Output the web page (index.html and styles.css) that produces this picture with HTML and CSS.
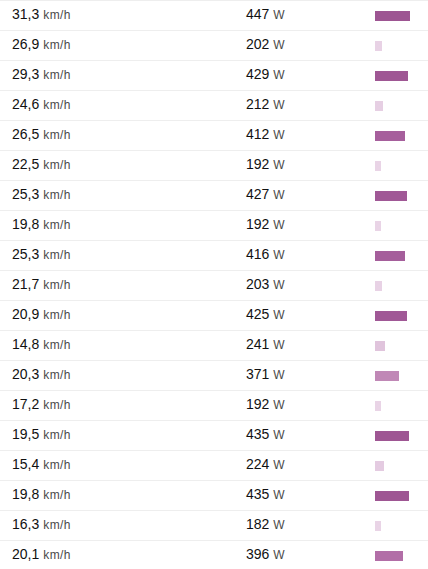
FILE: index.html
```html
<!DOCTYPE html>
<html lang="ja">
<head>
<meta charset="utf-8">
<title>Laps</title>
<link rel="stylesheet" href="styles.css">
</head>
<body>
<div class="laps">
  <div class="row"><div class="speed">31,3<span class="unit">km/h</span></div><div class="power">447<span class="unit">W</span></div><div class="barcell"><span class="bar" style="width:35px;background:#9d5592"></span></div></div>
  <div class="row"><div class="speed">26,9<span class="unit">km/h</span></div><div class="power">202<span class="unit">W</span></div><div class="barcell"><span class="bar" style="width:7px;background:#e8d2e5"></span></div></div>
  <div class="row"><div class="speed">29,3<span class="unit">km/h</span></div><div class="power">429<span class="unit">W</span></div><div class="barcell"><span class="bar" style="width:33px;background:#9f5794"></span></div></div>
  <div class="row"><div class="speed">24,6<span class="unit">km/h</span></div><div class="power">212<span class="unit">W</span></div><div class="barcell"><span class="bar" style="width:8px;background:#e6cfe3"></span></div></div>
  <div class="row"><div class="speed">26,5<span class="unit">km/h</span></div><div class="power">412<span class="unit">W</span></div><div class="barcell"><span class="bar" style="width:30px;background:#a65f9c"></span></div></div>
  <div class="row"><div class="speed">22,5<span class="unit">km/h</span></div><div class="power">192<span class="unit">W</span></div><div class="barcell"><span class="bar" style="width:6px;background:#e9d4e6"></span></div></div>
  <div class="row"><div class="speed">25,3<span class="unit">km/h</span></div><div class="power">427<span class="unit">W</span></div><div class="barcell"><span class="bar" style="width:32px;background:#a05896"></span></div></div>
  <div class="row"><div class="speed">19,8<span class="unit">km/h</span></div><div class="power">192<span class="unit">W</span></div><div class="barcell"><span class="bar" style="width:6px;background:#e9d4e6"></span></div></div>
  <div class="row"><div class="speed">25,3<span class="unit">km/h</span></div><div class="power">416<span class="unit">W</span></div><div class="barcell"><span class="bar" style="width:30px;background:#a55e9b"></span></div></div>
  <div class="row"><div class="speed">21,7<span class="unit">km/h</span></div><div class="power">203<span class="unit">W</span></div><div class="barcell"><span class="bar" style="width:7px;background:#e8d2e5"></span></div></div>
  <div class="row"><div class="speed">20,9<span class="unit">km/h</span></div><div class="power">425<span class="unit">W</span></div><div class="barcell"><span class="bar" style="width:32px;background:#a05896"></span></div></div>
  <div class="row"><div class="speed">14,8<span class="unit">km/h</span></div><div class="power">241<span class="unit">W</span></div><div class="barcell"><span class="bar" style="width:10px;background:#e0c4dc"></span></div></div>
  <div class="row"><div class="speed">20,3<span class="unit">km/h</span></div><div class="power">371<span class="unit">W</span></div><div class="barcell"><span class="bar" style="width:24px;background:#c088b6"></span></div></div>
  <div class="row"><div class="speed">17,2<span class="unit">km/h</span></div><div class="power">192<span class="unit">W</span></div><div class="barcell"><span class="bar" style="width:6px;background:#e9d4e6"></span></div></div>
  <div class="row"><div class="speed">19,5<span class="unit">km/h</span></div><div class="power">435<span class="unit">W</span></div><div class="barcell"><span class="bar" style="width:34px;background:#9e5693"></span></div></div>
  <div class="row"><div class="speed">15,4<span class="unit">km/h</span></div><div class="power">224<span class="unit">W</span></div><div class="barcell"><span class="bar" style="width:9px;background:#e4cbe1"></span></div></div>
  <div class="row"><div class="speed">19,8<span class="unit">km/h</span></div><div class="power">435<span class="unit">W</span></div><div class="barcell"><span class="bar" style="width:34px;background:#9e5693"></span></div></div>
  <div class="row"><div class="speed">16,3<span class="unit">km/h</span></div><div class="power">182<span class="unit">W</span></div><div class="barcell"><span class="bar" style="width:6px;background:#e9d4e6"></span></div></div>
  <div class="row"><div class="speed">20,1<span class="unit">km/h</span></div><div class="power">396<span class="unit">W</span></div><div class="barcell"><span class="bar" style="width:28px;background:#b26ea7"></span></div></div>
</div>
</body>
</html>
```

FILE: styles.css
```css
html, body {
  margin: 0;
  padding: 0;
  background: #ffffff;
}
body {
  font-family: "Liberation Sans", Arial, "Noto Sans CJK JP", sans-serif;
  color: #111111;
}
.laps {
  display: flex;
  flex-direction: column;
}
.row {
  display: grid;
  grid-template-columns: 234px 129px 1fr;
  align-items: center;
  height: 29px;
  padding-left: 12px;
  border-top: 1px solid #eeeeee;
  font-size: 14px;
  line-height: 27px;
  padding-bottom: 0;
}
.speed, .power {
  height: 27px;
  padding-bottom: 2px;
}
.unit {
  font-size: 12px;
  color: #4a4a4a;
  margin-left: 4px;
  letter-spacing: 0.4px;
}
.barcell {
  display: flex;
  align-items: center;
  height: 29px;
}
.bar {
  display: block;
  height: 10px;
}
```
